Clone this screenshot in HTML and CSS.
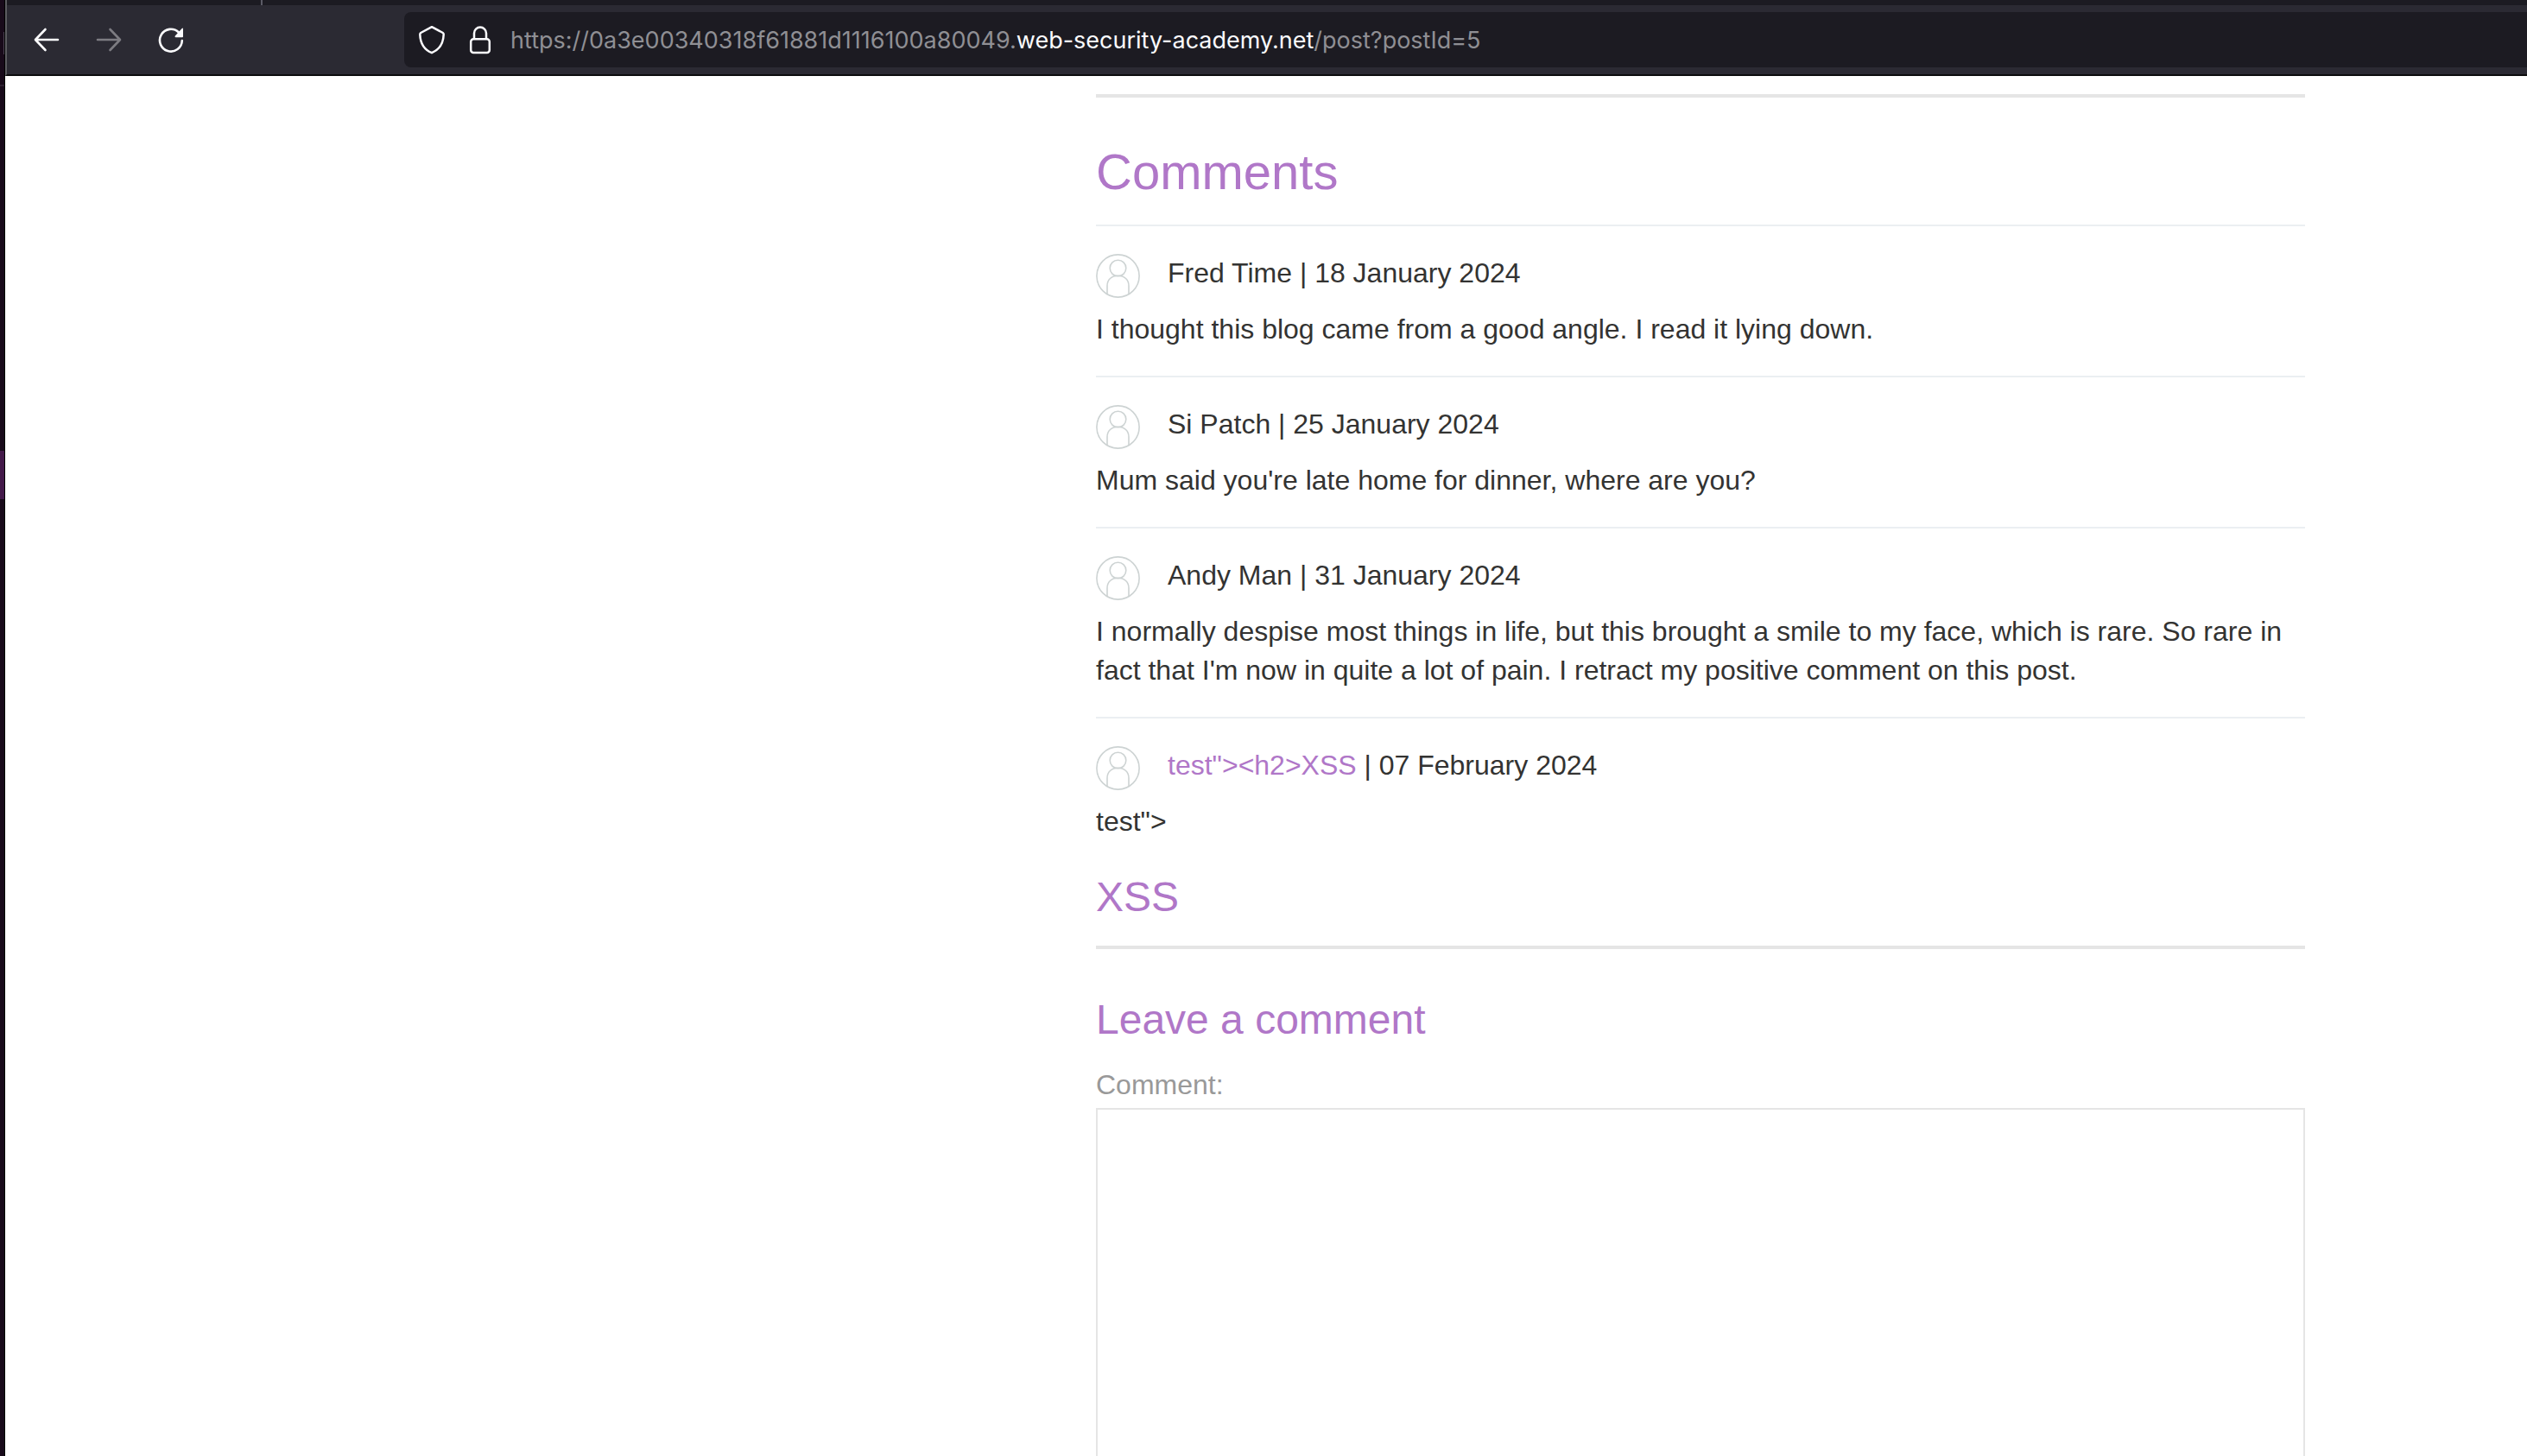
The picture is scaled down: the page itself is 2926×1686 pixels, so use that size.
FILE: index.html
```html
<!DOCTYPE html>
<html lang="en">
<head>
<meta charset="utf-8">
<title>Comments</title>
<link rel="stylesheet" href="styles.css">
</head>
<body>
<svg class="sprite" aria-hidden="true">
  <symbol id="avatar" viewBox="0 0 51 51">
    <g fill="none" stroke="#cdd3d3" stroke-width="1.6">
      <circle cx="25.5" cy="25.5" r="24.6"/>
      <circle cx="25.5" cy="16.5" r="9.3"/>
      <path d="M13 46.5V37c0-7 5-11.700 12.500-11.700S38 30 38 37v9.500"/>
    </g>
  </symbol>
</svg>
<div class="screen">
  <div class="desktop"><div class="desktop-glow"></div></div>
  <div class="window">
    <div class="tabs"><span class="tab-edge"></span></div>
    <nav class="toolbar" aria-label="Navigation">
      <div class="nav-buttons">
        <button class="nav-button" type="button" aria-label="Back">
          <svg width="32" height="32" viewBox="0 0 32 32"><path d="M29 16H3.500M14.500 4L3 16l11.500 12" fill="none" stroke="#fbfbfe" stroke-width="2.600" stroke-linecap="round" stroke-linejoin="round"/></svg>
        </button>
        <button class="nav-button" type="button" aria-label="Forward" disabled>
          <svg width="32" height="32" viewBox="0 0 32 32"><path d="M3 16h25.500M17.500 4L29 16 17.500 28" fill="none" stroke="#7d7c82" stroke-width="2.600" stroke-linecap="round" stroke-linejoin="round"/></svg>
        </button>
        <button class="nav-button" type="button" aria-label="Reload">
          <svg width="32" height="32" viewBox="0 0 32 32"><path d="M28.800 17A12.900 12.900 0 1 1 25 7.500" fill="none" stroke="#fbfbfe" stroke-width="2.600" stroke-linecap="round"/><path d="M30 3v9.200a1 1 0 0 1-1 1h-7.600q-1.600-.4-.6-1.700L28.600 3q1.200-1 1.400 0z" fill="#fbfbfe"/></svg>
        </button>
      </div>
      <div class="address">
        <div class="site-icons">
          <svg width="32" height="34" viewBox="0 0 32 34"><path d="M16 2.200L28.800 9q1 .6.900 2C29.300 21 25 28.500 16 32.200 7 28.500 2.700 21 2.300 11q0-1.400.9-2z" fill="none" stroke="#fbfbfe" stroke-width="2.500" stroke-linejoin="round"/></svg>
          <svg width="26" height="34" viewBox="0 0 26 34"><g fill="none" stroke="#fbfbfe" stroke-width="2.500"><rect x="2.200" y="16.200" width="21.600" height="15.800" rx="3"/><path d="M6 16V9.500a7 7 0 0 1 14 0V16"/></g></svg>
        </div>
        <span class="url">https://0a3e00340318f61881d1116100a80049.<span class="domain">web-security-academy.net</span>/post?postId=5</span>
      </div>
    </nav>
    <main class="page">
      <div class="column">
        <hr class="rule">
        <h1 class="title">Comments</h1>
        <section class="comment">
          <div class="byline"><svg class="avatar"><use href="#avatar"/></svg><span>Fred Time | 18 January 2024</span></div>
          <p class="text">I thought this blog came from a good angle. I read it lying down.</p>
        </section>
        <section class="comment">
          <div class="byline"><svg class="avatar"><use href="#avatar"/></svg><span>Si Patch | 25 January 2024</span></div>
          <p class="text">Mum said you're late home for dinner, where are you?</p>
        </section>
        <section class="comment">
          <div class="byline"><svg class="avatar"><use href="#avatar"/></svg><span>Andy Man | 31 January 2024</span></div>
          <p class="text">I normally despise most things in life, but this brought a smile to my face, which is rare. So rare in fact that I'm now in quite a lot of pain. I retract my positive comment on this post.</p>
        </section>
        <section class="comment">
          <div class="byline"><svg class="avatar"><use href="#avatar"/></svg><span><a class="author" href="#author">test"&gt;&lt;h2&gt;XSS</a> | 07 February 2024</span></div>
          <p class="text">test"&gt;</p>
        </section>
        <h2 class="subtitle injected">XSS</h2>
        <hr class="rule">
        <form>
          <h2 class="subtitle form-title">Leave a comment</h2>
          <label class="label" for="comment">Comment:</label>
          <textarea class="field" id="comment" rows="12"></textarea>
        </form>
      </div>
    </main>
  </div>
</div>
</body>
</html>
```
FILE: styles.css
```css
* { box-sizing: border-box; }

body {
  margin: 0;
  font-family: "Liberation Sans", Arial, sans-serif;
  font-size: 32px;
  line-height: 45px;
  color: #333332;
  background: #fff;
}

.sprite { position: absolute; width: 0; height: 0; }

.screen {
  display: flex;
  height: 100vh;
  overflow: hidden;
}

/* strip of the desktop left of the window */
.desktop {
  flex: none;
  width: 6px;
  padding-top: 522px;
  background:
    linear-gradient(#4a4150, #4a4150) 4px 37px / 1px 26px no-repeat,
    linear-gradient(#2c2030, #2c2030) 0 98px / 5px 2px no-repeat,
    #180a1a;
  border-right: 1px solid #000;
}
.desktop-glow { height: 56px; background: #43194a; }

.window {
  flex: 1;
  min-width: 0;
  display: flex;
  flex-direction: column;
}

.tabs {
  flex: none;
  display: flex;
  height: 6px;
  padding-left: 294px;
  background: #1c1b22;
  border-left: 2px solid #5b5b60;
}
.tab-edge { width: 2px; background: #5b5b66; }

.toolbar {
  flex: none;
  display: flex;
  gap: 254px;
  height: 82px;
  padding: 8px 0 8px 30px;
  background: #2b2a33;
  border-left: 2px solid #5b5b60;
  border-bottom: 2px solid #0c0c0d;
}

.nav-buttons { display: flex; align-items: center; gap: 40px; }
.nav-button {
  display: flex;
  padding: 0;
  border: 0;
  background: none;
}

.address {
  flex: 1;
  min-width: 0;
  display: flex;
  align-items: center;
  gap: 22px;
  padding-left: 16px;
  border-radius: 8px 0 0 8px;
  background: #1c1b22;
}
.site-icons { display: flex; gap: 27px; }

.url {
  padding-top: 2px;
  font-family: Inter, sans-serif;
  font-size: 27px;
  line-height: 40px;
  color: #8f8f94;
  white-space: nowrap;
}
.domain { color: #fbfbfe; }

.page {
  flex: 1;
  min-height: 0;
  overflow: hidden;
  display: grid;
  grid-template-columns: 1263fr minmax(0, 1400px) 257fr;
  padding-top: 21px;
}
.column { grid-column: 2; }

.rule {
  height: 4px;
  margin: 0;
  border: 0;
  background: #e5e5e5;
}

.title {
  margin: 46px 0 21px;
  font-size: 58px;
  line-height: 80px;
  font-weight: 400;
  color: #b077c8;
}

.comment {
  padding: 32px 0 31px;
  border-top: 2px solid #ebeff2;
}
.byline {
  display: flex;
  gap: 32px;
  margin-bottom: 14px;
  line-height: 45px;
}
.avatar { flex: none; width: 51px; height: 51px; }
.author { color: #b077c8; text-decoration: none; }
.text { margin: 0; }

.subtitle {
  font-size: 48px;
  line-height: 68px;
  font-weight: 400;
  color: #b077c8;
}
.injected { margin: 0 0 22px; }
.form-title { margin: 48px 0 19px; }

.label { display: block; margin-bottom: 4px; color: #999; }
.field {
  display: block;
  width: 100%;
  padding: 12px;
  border: 2px solid #e5e5e5;
  font: inherit;
  resize: none;
  background: #fff;
}
```
